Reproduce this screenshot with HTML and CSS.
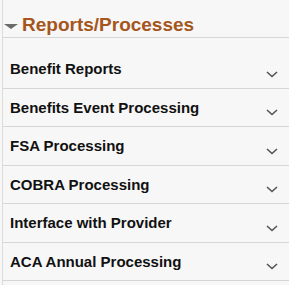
FILE: index.html
```html
<!DOCTYPE html>
<html lang="en">
<head>
    <meta charset="UTF-8">
    <title>Reports/Processes</title>
    <link rel="stylesheet" href="styles.css">
</head>
<body>
    <div class="panel">
        <div class="panel-head">
            <span class="caret"></span>
            <span class="title">Reports/Processes</span>
        </div>
        <ul class="menu">
            <li class="item"><span class="label">Benefit Reports</span><svg class="chev" width="12" height="7" viewBox="0 0 12 7"><path d="M1 1 L6 5.5 L11 1" fill="none" stroke="#555" stroke-width="1.6"/></svg></li>
            <li class="item"><span class="label">Benefits Event Processing</span><svg class="chev" width="12" height="7" viewBox="0 0 12 7"><path d="M1 1 L6 5.5 L11 1" fill="none" stroke="#555" stroke-width="1.6"/></svg></li>
            <li class="item"><span class="label">FSA Processing</span><svg class="chev" width="12" height="7" viewBox="0 0 12 7"><path d="M1 1 L6 5.5 L11 1" fill="none" stroke="#555" stroke-width="1.6"/></svg></li>
            <li class="item"><span class="label">COBRA Processing</span><svg class="chev" width="12" height="7" viewBox="0 0 12 7"><path d="M1 1 L6 5.5 L11 1" fill="none" stroke="#555" stroke-width="1.6"/></svg></li>
            <li class="item"><span class="label">Interface with Provider</span><svg class="chev" width="12" height="7" viewBox="0 0 12 7"><path d="M1 1 L6 5.5 L11 1" fill="none" stroke="#555" stroke-width="1.6"/></svg></li>
            <li class="item"><span class="label">ACA Annual Processing</span><svg class="chev" width="12" height="7" viewBox="0 0 12 7"><path d="M1 1 L6 5.5 L11 1" fill="none" stroke="#555" stroke-width="1.6"/></svg></li>
        </ul>
    </div>
</body>
</html>
```

FILE: styles.css
```css
html, body { margin: 0; padding: 0; background: #f7f7f7; }
body { font-family: "Liberation Sans", Arial, sans-serif; height: 285px; overflow: hidden; }
.panel { margin-left: 2px; border-left: 1px solid #dcdcdc; min-height: 285px; }

.panel-head { height: 24px; padding-top: 13px; border-bottom: 1px solid #d6d6d6; display: flex; align-items: center; }
.caret { width: 0; height: 0; margin: 2px 4px 0 1px; border-left: 7px solid transparent; border-right: 7px solid transparent; border-top: 5px solid #6b6b6b; }
.title { font-size: 19px; font-weight: bold; color: #a5561c; line-height: 22px; }

.menu { list-style: none; margin: 0; padding: 12px 0 0 0; }
.item { display: flex; justify-content: space-between; height: 37.5px; padding: 0 11px 0 7px; border-bottom: 1px solid #d6d6d6; }
.label { font-size: 15px; font-weight: bold; color: #111; line-height: 16px; padding-top: 11px; }
.chev { align-self: flex-end; margin-bottom: 10px; }
```
